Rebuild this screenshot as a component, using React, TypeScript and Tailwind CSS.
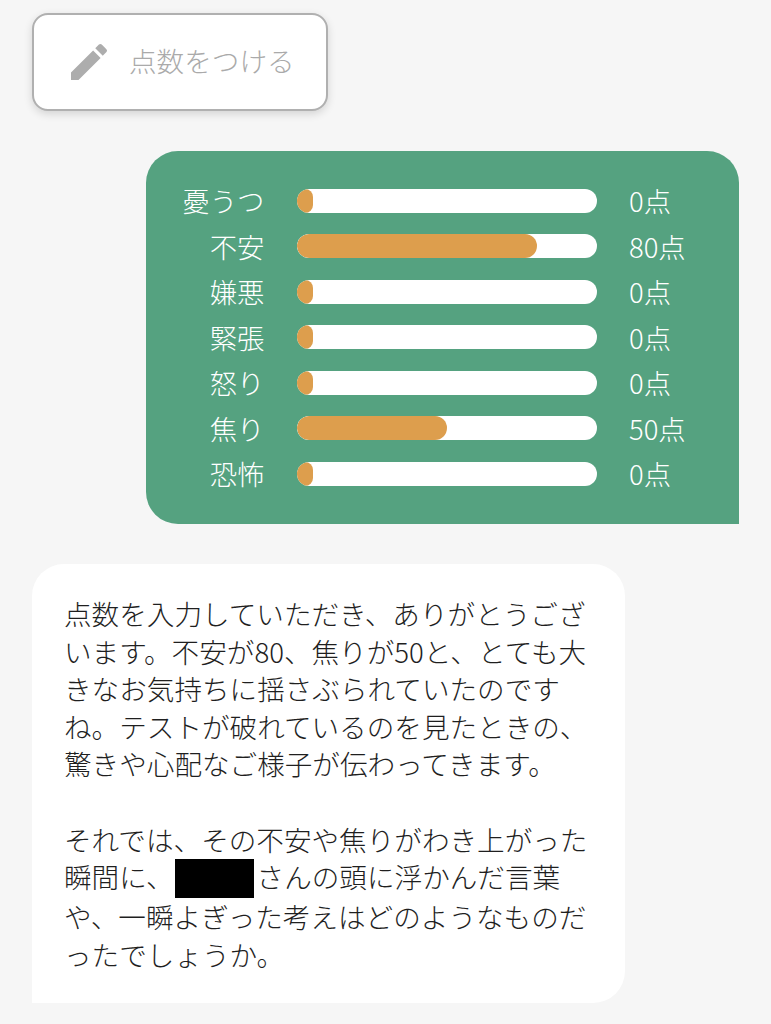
import React from 'react';

const scores = [
  { label: '憂うつ', value: 0 },
  { label: '不安', value: 80 },
  { label: '嫌悪', value: 0 },
  { label: '緊張', value: 0 },
  { label: '怒り', value: 0 },
  { label: '焦り', value: 50 },
  { label: '恐怖', value: 0 },
];

function ScoreRow({ label, value }: { label: string; value: number }) {
  // the fill never gets narrower than the 16px stub seen at 0 points
  const width = Math.max(16, value * 3);
  return (
    <div className="flex items-center h-[45.5px]">
      <div className="w-[118.5px] text-right text-[27.4px] font-light text-white leading-none">{label}</div>
      <div className="ml-[32.5px] w-[300px] h-[24px] bg-white rounded-full overflow-hidden">
        <div className="h-full bg-[#dd9e4d] rounded-full" style={{ width }} />
      </div>
      <div className="ml-[32px] text-[27.4px] font-light text-white leading-none">{value}点</div>
    </div>
  );
}

export default function App() {
  return (
    <div className="w-[771px] h-[1024px] overflow-hidden bg-[#f6f6f6] font-['Noto_Sans_CJK_JP','Noto_Sans',sans-serif]">
      <div className="pt-[13px] pl-[32px]">
        <button className="w-[296px] h-[98px] bg-white border-2 border-[#b0b0b0] rounded-[16px] shadow-[0_3px_8px_rgba(0,0,0,0.14)] flex items-center pl-[31px]">
          <svg width="48" height="48" viewBox="0 0 24 24" fill="#adadad" className="shrink-0">
            <path d="M3 17.25V21h3.75L17.81 9.94l-3.75-3.75L3 17.25zM20.71 7.04a1 1 0 0 0 0-1.41l-2.34-2.34a1 1 0 0 0-1.41 0l-1.83 1.83 3.75 3.75 1.83-1.83z" />
          </svg>
          <span className="ml-[16px] mb-[2px] text-[27.6px] font-light text-[#aaaaaa] leading-none">点数をつける</span>
        </button>
      </div>

      <div className="mt-[40px] ml-[146px] w-[593px] h-[373px] bg-[#55a280] rounded-t-[32px] rounded-bl-[32px] pt-[27px]">
        {scores.map((s) => (
          <ScoreRow key={s.label} label={s.label} value={s.value} />
        ))}
      </div>

      <div className="mt-[40px] ml-[32px] w-[593px] h-[439px] bg-white rounded-t-[32px] rounded-br-[32px] pt-[31px] pl-[32px] text-[27.6px] leading-[37.6px] font-light text-[#1f1f1f] whitespace-nowrap">
        <p>
          点数を入力していただき、ありがとうござ<br />
          います。不安が80、焦りが50と、とても大<br />
          きなお気持ちに揺さぶられていたのです<br />
          ね。テストが破れているのを見たときの、<br />
          驚きや心配なご様子が伝わってきます。
        </p>
        <p className="mt-[37.6px]">
          それでは、その不安や焦りがわき上がった<br />
          瞬間に、<span className="inline-block ml-[1px] w-[79px] h-[39px] bg-black align-[-10px] mr-[3px]" />さんの頭に浮かんだ言葉<br />
          や、一瞬よぎった考えはどのようなものだ<br />
          ったでしょうか。
        </p>
      </div>
    </div>
  );
}
